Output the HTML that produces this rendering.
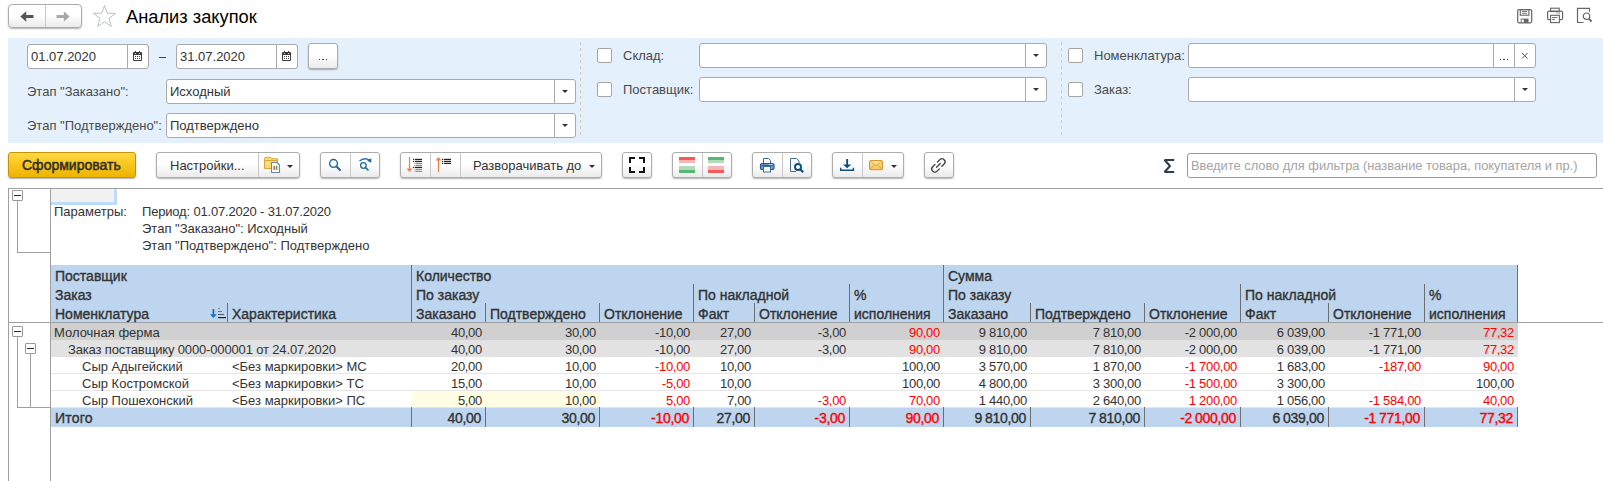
<!DOCTYPE html><html><head><meta charset="utf-8"><style>

*{box-sizing:border-box;margin:0;padding:0}
html,body{width:1603px;height:481px;overflow:hidden;background:#fff;font-family:"Liberation Sans",sans-serif;color:#333}
.abs{position:absolute}
.t{position:absolute;white-space:pre;line-height:1}
.btn{position:absolute;border:1px solid #adadad;border-radius:3px;background:linear-gradient(#ffffff 0%,#ffffff 45%,#ebebeb 100%);box-shadow:0 1px 1.5px rgba(0,0,0,.3)}
.div{position:absolute;top:0;bottom:0;width:1px;background:#c8c8c8}
.inp{position:absolute;border:1px solid #aaaaaa;border-radius:3px;background:#fff}
.cb{position:absolute;width:15px;height:15px;border:1px solid #a5a5a5;border-radius:2px;background:#fff}
.lbl{position:absolute;white-space:pre;font-size:13px;line-height:1;color:#4a4a4a}
.ln{position:absolute;background:#a0a0a0}
.c{position:absolute;white-space:pre;font-size:13px;line-height:1}
.r{text-align:right}
.red{color:#f00}
.hd{font-size:14px;-webkit-text-stroke:0.35px #333}

</style></head><body>
<div class="btn" style="left:8px;top:4px;width:74px;height:24px;border-radius:4px"><div class="div" style="left:36px"></div></div>
<svg class="abs" style="left:20px;top:10px" width="14" height="12" viewBox="0 0 14 12"><path d="M0.3 6.5 L6.2 1.2 L6.2 5 L13.5 5 L13.5 8.1 L6.2 8.1 L6.2 11.8 Z" fill="#555"/></svg>
<svg class="abs" style="left:56px;top:10px" width="14" height="12" viewBox="0 0 14 12"><path d="M13.7 6.5 L7.8 1.2 L7.8 5 L0.5 5 L0.5 8.1 L7.8 8.1 L7.8 11.8 Z" fill="#a9a9a9"/></svg>
<svg class="abs" style="left:92px;top:4px" width="26" height="24" viewBox="0 0 26 24"><path d="M12.5 1.5 L15.3 9.2 L23.5 9.4 L17 14.4 L19.3 22.5 L12.5 17.8 L5.7 22.5 L8 14.4 L1.5 9.4 L9.7 9.2 Z" fill="none" stroke="#b9bec4" stroke-width="1"/></svg>
<div class="t" style="left:126px;top:7.7px;font-size:18.3px;color:#000">Анализ закупок</div>
<svg class="abs" style="left:1516px;top:8px" width="17" height="16" viewBox="0 0 17 16">
<rect x="1.7" y="1.6" width="14" height="13.2" rx="1.2" fill="none" stroke="#666" stroke-width="1.2"/>
<rect x="4.3" y="1.6" width="8.6" height="5.6" fill="none" stroke="#666" stroke-width="1.1"/>
<line x1="6" y1="3.5" x2="11" y2="3.5" stroke="#666" stroke-width="0.9"/><line x1="6" y1="5.3" x2="11" y2="5.3" stroke="#666" stroke-width="0.9"/>
<rect x="4.7" y="10.6" width="7.8" height="4.2" fill="#666"/><rect x="5.6" y="11.6" width="2.2" height="2.6" fill="#fff"/></svg>
<svg class="abs" style="left:1546px;top:7px" width="18" height="17" viewBox="0 0 18 17">
<rect x="4.6" y="1.2" width="8.6" height="3.4" fill="none" stroke="#666" stroke-width="1.1"/>
<rect x="1.6" y="4.2" width="15" height="8.5" rx="1.5" fill="none" stroke="#666" stroke-width="1.2"/>
<rect x="4.6" y="8.3" width="8.8" height="7.3" fill="#fff" stroke="#666" stroke-width="1.1"/>
<line x1="6" y1="10.5" x2="11.5" y2="10.5" stroke="#666" stroke-width="0.9"/><line x1="6" y1="12.5" x2="9" y2="12.5" stroke="#666" stroke-width="0.9"/>
<line x1="10.5" y1="6.1" x2="11.6" y2="6.1" stroke="#666" stroke-width="0.9"/><line x1="12.6" y1="6.1" x2="14" y2="6.1" stroke="#666" stroke-width="0.9"/></svg>
<svg class="abs" style="left:1576px;top:7px" width="18" height="17" viewBox="0 0 18 17">
<path d="M7.5 15.5 L1.5 15.5 L1.5 1.3 L13.5 1.3 L13.5 4.8" fill="none" stroke="#666" stroke-width="1.2"/>
<circle cx="10.5" cy="9.2" r="3.2" fill="none" stroke="#666" stroke-width="1.2"/>
<line x1="12.8" y1="11.6" x2="15.6" y2="14.6" stroke="#666" stroke-width="1.8"/></svg>
<div class="abs" style="left:8px;top:38px;width:1595px;height:105px;background:#e4f0fc"></div>
<div class="inp" style="left:27px;top:44px;width:122px;height:25px"><div class="div" style="left:99px;background:#aaa"></div></div>
<div class="t" style="left:31px;top:50px;font-size:13px;color:#333">01.07.2020</div>
<svg class="abs" style="left:133px;top:51px" width="9" height="10" viewBox="0 0 9 10"><rect x="0" y="1" width="9" height="9" rx="1" fill="#3c3c3c"/><rect x="1" y="4" width="7" height="5" fill="#fff"/><rect x="2" y="0" width="1" height="2" fill="#3c3c3c"/><rect x="6" y="0" width="1" height="2" fill="#3c3c3c"/><rect x="2" y="2" width="1" height="1" fill="#ccc"/><rect x="6" y="2" width="1" height="1" fill="#ccc"/><g fill="#3c3c3c"><rect x="2" y="5" width="1" height="1"/><rect x="4" y="5" width="1" height="1"/><rect x="6" y="5" width="1" height="1"/><rect x="2" y="7" width="1" height="1"/><rect x="4" y="7" width="1" height="1"/><rect x="6" y="7" width="1" height="1"/></g></svg>
<div class="abs" style="left:159px;top:57px;width:7px;height:1px;background:#444"></div>
<div class="inp" style="left:176px;top:44px;width:122px;height:25px"><div class="div" style="left:99px;background:#aaa"></div></div>
<div class="t" style="left:180px;top:50px;font-size:13px;color:#333">31.07.2020</div>
<svg class="abs" style="left:282px;top:51px" width="9" height="10" viewBox="0 0 9 10"><rect x="0" y="1" width="9" height="9" rx="1" fill="#3c3c3c"/><rect x="1" y="4" width="7" height="5" fill="#fff"/><rect x="2" y="0" width="1" height="2" fill="#3c3c3c"/><rect x="6" y="0" width="1" height="2" fill="#3c3c3c"/><rect x="2" y="2" width="1" height="1" fill="#ccc"/><rect x="6" y="2" width="1" height="1" fill="#ccc"/><g fill="#3c3c3c"><rect x="2" y="5" width="1" height="1"/><rect x="4" y="5" width="1" height="1"/><rect x="6" y="5" width="1" height="1"/><rect x="2" y="7" width="1" height="1"/><rect x="4" y="7" width="1" height="1"/><rect x="6" y="7" width="1" height="1"/></g></svg>
<div class="btn" style="left:308px;top:43px;width:30px;height:26px"></div>
<div class="abs" style="left:319.2px;top:59px;width:1.2px;height:1.2px;background:#444"></div>
<div class="abs" style="left:322.4px;top:59px;width:1.2px;height:1.2px;background:#444"></div>
<div class="abs" style="left:325.6px;top:59px;width:1.2px;height:1.2px;background:#444"></div>
<div class="lbl" style="left:27px;top:85px">Этап "Заказано":</div>
<div class="inp" style="left:166px;top:79px;width:410px;height:25px"></div>
<div class="abs" style="left:554px;top:79px;width:1px;height:25px;background:#aaa"></div>
<svg class="abs" style="left:562px;top:90px" width="6" height="3" viewBox="0 0 6 3"><path d="M0 0 L6 0 L3 3 Z" fill="#333"/></svg>
<div class="t" style="left:170px;top:85px;font-size:13px;color:#333">Исходный</div>
<div class="lbl" style="left:27px;top:119px">Этап "Подтверждено":</div>
<div class="inp" style="left:166px;top:113px;width:410px;height:25px"></div>
<div class="abs" style="left:554px;top:113px;width:1px;height:25px;background:#aaa"></div>
<svg class="abs" style="left:562px;top:124px" width="6" height="3" viewBox="0 0 6 3"><path d="M0 0 L6 0 L3 3 Z" fill="#333"/></svg>
<div class="t" style="left:170px;top:119px;font-size:13px;color:#333">Подтверждено</div>
<div class="abs" style="left:580px;top:42px;width:1px;height:96px;background:repeating-linear-gradient(#d4c8c0 0 3px,transparent 3px 6px)"></div>
<div class="abs" style="left:1061px;top:42px;width:1px;height:96px;background:repeating-linear-gradient(#d4c8c0 0 3px,transparent 3px 6px)"></div>
<div class="cb" style="left:597px;top:48px"></div><div class="lbl" style="left:623px;top:48.6px">Склад:</div>
<div class="inp" style="left:699px;top:43px;width:348px;height:25px"></div>
<div class="abs" style="left:1025px;top:43px;width:1px;height:25px;background:#aaa"></div>
<svg class="abs" style="left:1033px;top:54px" width="6" height="3" viewBox="0 0 6 3"><path d="M0 0 L6 0 L3 3 Z" fill="#333"/></svg>
<div class="cb" style="left:597px;top:82px"></div><div class="lbl" style="left:623px;top:82.8px">Поставщик:</div>
<div class="inp" style="left:699px;top:77px;width:348px;height:25px"></div>
<div class="abs" style="left:1025px;top:77px;width:1px;height:25px;background:#aaa"></div>
<svg class="abs" style="left:1033px;top:88px" width="6" height="3" viewBox="0 0 6 3"><path d="M0 0 L6 0 L3 3 Z" fill="#333"/></svg>
<div class="cb" style="left:1068px;top:48px"></div><div class="lbl" style="left:1094px;top:48.6px">Номенклатура:</div>
<div class="inp" style="left:1188px;top:43px;width:348px;height:25px"></div>
<div class="abs" style="left:1514px;top:43px;width:1px;height:25px;background:#aaa"></div>
<svg class="abs" style="left:1521px;top:52px" width="8" height="8" viewBox="0 0 8 8"><path d="M1 1 L6.5 6.5 M6.5 1 L1 6.5" stroke="#555" stroke-width="1"/></svg>
<div class="abs" style="left:1493px;top:43px;width:1px;height:25px;background:#aaa"></div>
<div class="abs" style="left:1500.2px;top:59px;width:1.2px;height:1.2px;background:#444"></div>
<div class="abs" style="left:1503.4px;top:59px;width:1.2px;height:1.2px;background:#444"></div>
<div class="abs" style="left:1506.6px;top:59px;width:1.2px;height:1.2px;background:#444"></div>
<div class="cb" style="left:1068px;top:82px"></div><div class="lbl" style="left:1094px;top:82.8px">Заказ:</div>
<div class="inp" style="left:1188px;top:77px;width:348px;height:25px"></div>
<div class="abs" style="left:1514px;top:77px;width:1px;height:25px;background:#aaa"></div>
<svg class="abs" style="left:1522px;top:88px" width="6" height="3" viewBox="0 0 6 3"><path d="M0 0 L6 0 L3 3 Z" fill="#333"/></svg>
<div class="btn" style="left:8px;top:152px;width:128px;height:26px;border-color:#c49408;background:linear-gradient(#fdd842,#f7c51c 50%,#eeb400)"></div>
<div class="t" style="left:22px;top:157.8px;font-size:14px;color:#2a2a2a;-webkit-text-stroke:0.45px #2a2a2a">Сформировать</div>
<div class="btn" style="left:156px;top:152px;width:144px;height:26px"><div class="div" style="left:101px"></div></div>
<div class="t" style="left:170px;top:158.6px;font-size:13px;color:#333">Настройки...</div>
<svg class="abs" style="left:263px;top:156px" width="18" height="18" viewBox="0 0 18 18">
<path d="M1.5 4.5 L1.5 2.8 Q1.5 1.3 3 1.3 L7 1.3 Q8.3 1.3 8.8 2.8 L14.5 2.8 L14.5 12.5 L1.5 12.5 Z" fill="#f9dc7a" stroke="#dba43a" stroke-width="1"/>
<path d="M1.5 4.5 L14.5 4.5" stroke="#dba43a" stroke-width="1"/>
<path d="M8.5 6.5 L14 6.5 L16.5 9 L16.5 16.5 L8.5 16.5 Z" fill="#fff" stroke="#70889c" stroke-width="1.1" stroke-linejoin="round"/>
<rect x="10.5" y="10" width="1.3" height="3.6" fill="#e83030"/><rect x="13" y="10" width="1.3" height="3.6" fill="#30b040"/><rect x="10" y="13.6" width="5" height="0.5" fill="#999"/></svg>
<svg class="abs" style="left:287px;top:165px" width="6" height="3" viewBox="0 0 6 3"><path d="M0 0 L6 0 L3 3 Z" fill="#333"/></svg>
<div class="btn" style="left:320px;top:152px;width:60px;height:26px"><div class="div" style="left:29px"></div></div>
<svg class="abs" style="left:326px;top:156px" width="18" height="18" viewBox="0 0 18 18">
<circle cx="7.5" cy="7.4" r="3.9" fill="none" stroke="#1f6aa0" stroke-width="1.4"/><line x1="10.3" y1="10.3" x2="14" y2="14" stroke="#1f6aa0" stroke-width="2" stroke-linecap="round"/></svg>
<svg class="abs" style="left:356px;top:156px" width="18" height="18" viewBox="0 0 18 18">
<circle cx="7.4" cy="9.5" r="2.8" fill="none" stroke="#1f6aa0" stroke-width="1.3"/><line x1="9.5" y1="11.6" x2="12" y2="14" stroke="#1f6aa0" stroke-width="1.7" stroke-linecap="round"/>
<path d="M3.5 5 Q8.5 0.8 13.5 4.2" fill="none" stroke="#1f6aa0" stroke-width="1.5"/><path d="M11 4.8 L15.3 2.2 L15.3 6.8 Z" fill="#1f6aa0"/></svg>
<div class="btn" style="left:400px;top:152px;width:202px;height:26px"><div class="div" style="left:29px"></div><div class="div" style="left:59px"></div></div>
<svg class="abs" style="left:405px;top:156px" width="20" height="18" viewBox="0 0 20 18">
<line x1="4.5" y1="1" x2="4.5" y2="14" stroke="#f08040" stroke-width="1.2"/><path d="M1.5 12.5 L7.5 12.5 L4.5 16 Z" fill="#f08040"/>
<g fill="#222"><rect x="8" y="2.8" width="1.2" height="1.2"/><rect x="10" y="2.8" width="7" height="1.2"/><rect x="8" y="4.8" width="1.2" height="1.2"/><rect x="10" y="4.8" width="7" height="1.2"/><rect x="8" y="10.8" width="1.2" height="1.2"/><rect x="10" y="10.8" width="7" height="1.2"/></g>
<g fill="#777"><rect x="9.5" y="6.8" width="1" height="1"/><rect x="11" y="6.8" width="6" height="1"/><rect x="9.5" y="8.8" width="1" height="1"/><rect x="11" y="8.8" width="6" height="1"/><rect x="9.5" y="12.8" width="1" height="1"/><rect x="11" y="12.8" width="6" height="1"/><rect x="9.5" y="14.8" width="1" height="1"/><rect x="11" y="14.8" width="6" height="1"/></g></svg>
<svg class="abs" style="left:434px;top:156px" width="20" height="18" viewBox="0 0 20 18">
<line x1="4.5" y1="3" x2="4.5" y2="16" stroke="#f08040" stroke-width="1.2"/><path d="M1.5 4.5 L7.5 4.5 L4.5 1 Z" fill="#f08040"/>
<g fill="#222"><rect x="8" y="2.8" width="1.2" height="1.2"/><rect x="10" y="2.8" width="7" height="1.2"/><rect x="8" y="4.8" width="1.2" height="1.2"/><rect x="10" y="4.8" width="7" height="1.2"/><rect x="8" y="6.8" width="1.2" height="1.2"/><rect x="10" y="6.8" width="7" height="1.2"/></g></svg>
<div class="t" style="left:473px;top:158.6px;font-size:13px;color:#333">Разворачивать до</div>
<svg class="abs" style="left:589px;top:165px" width="6" height="3" viewBox="0 0 6 3"><path d="M0 0 L6 0 L3 3 Z" fill="#333"/></svg>
<div class="btn" style="left:622px;top:152px;width:30px;height:26px"></div>
<svg class="abs" style="left:628px;top:156px" width="18" height="18" viewBox="0 0 18 18" fill="none" stroke="#111" stroke-width="2">
<path d="M2 7 L2 2 L7 2"/><path d="M11 2 L16 2 L16 7"/><path d="M2 11 L2 16 L7 16"/><path d="M16 11 L16 16 L11 16"/></svg>
<div class="btn" style="left:672px;top:152px;width:60px;height:26px"><div class="div" style="left:29px"></div></div>
<div class="abs" style="left:679px;top:157px;width:16px;height:3px;background:#f25a5a"></div>
<div class="abs" style="left:679px;top:160px;width:16px;height:3px;background:#f9b4b4"></div>
<div class="abs" style="left:679px;top:166px;width:16px;height:4px;background:#b0dcb8"></div>
<div class="abs" style="left:679px;top:170px;width:16px;height:3px;background:#5cb672"></div>
<div class="abs" style="left:708px;top:157px;width:16px;height:3px;background:#5cb672"></div>
<div class="abs" style="left:708px;top:160px;width:16px;height:3px;background:#b0dcb8"></div>
<div class="abs" style="left:708px;top:166px;width:16px;height:4px;background:#f9b4b4"></div>
<div class="abs" style="left:708px;top:170px;width:16px;height:3px;background:#f25a5a"></div>
<div class="btn" style="left:752px;top:152px;width:60px;height:26px"><div class="div" style="left:29px"></div></div>
<svg class="abs" style="left:759px;top:157px" width="17" height="17" viewBox="0 0 17 17">
<path d="M4.5 7 V1.5 H9.5 L11.5 3.5 V7" fill="#fff" stroke="#3d6a94" stroke-width="1"/>
<rect x="1.5" y="6.5" width="13.5" height="6" rx="1.6" fill="#6f9fcf" stroke="#285a88" stroke-width="1.2"/>
<line x1="2.5" y1="8.3" x2="14" y2="8.3" stroke="#285a88" stroke-width="1"/>
<rect x="10" y="7" width="1.2" height="1" fill="#fff"/><rect x="12" y="7" width="1.2" height="1" fill="#fff"/>
<rect x="4.5" y="9.5" width="7" height="5.5" fill="#fff" stroke="#3d6a94" stroke-width="1"/></svg>
<svg class="abs" style="left:789px;top:157px" width="17" height="17" viewBox="0 0 17 17">
<path d="M7 14.5 H1.5 V1.5 H7.5 L10 4 V6" fill="#fafafa" stroke="#4a6a88" stroke-width="1"/>
<circle cx="9" cy="10" r="3" fill="#fff" stroke="#0c4c82" stroke-width="1.9"/><line x1="11.2" y1="12.2" x2="14.2" y2="15.2" stroke="#0c4c82" stroke-width="2.2"/></svg>
<div class="btn" style="left:832px;top:152px;width:72px;height:26px"><div class="div" style="left:29px"></div></div>
<svg class="abs" style="left:839px;top:157px" width="17" height="16" viewBox="0 0 17 16" fill="#0f4f80">
<rect x="7.2" y="2" width="1.9" height="7"/><path d="M4 7.6 L12.3 7.6 L8.15 11.3 Z"/><path d="M1 10.8 L2.4 10.8 L2.4 12.6 L13.7 12.6 L13.7 10.8 L15.1 10.8 L15.1 14 L1 14 Z"/></svg>
<svg class="abs" style="left:868px;top:159px" width="16" height="13" viewBox="0 0 16 13">
<defs><linearGradient id="env" x1="0" y1="0" x2="0" y2="1"><stop offset="0" stop-color="#fde7a0"/><stop offset="1" stop-color="#f3c25a"/></linearGradient></defs>
<rect x="1.5" y="1.5" width="13" height="9.3" rx="1.5" fill="url(#env)" stroke="#d6952a" stroke-width="1.1"/>
<path d="M2.5 2.5 L8 6.8 L13.5 2.5 M2.5 10 L6.3 5.8 M13.5 10 L9.7 5.8" fill="none" stroke="#d9a03a" stroke-width="0.9"/></svg>
<svg class="abs" style="left:891px;top:165px" width="6" height="3" viewBox="0 0 6 3"><path d="M0 0 L6 0 L3 3 Z" fill="#333"/></svg>
<div class="btn" style="left:924px;top:152px;width:30px;height:26px"></div>
<svg class="abs" style="left:929px;top:156px" width="19" height="19" viewBox="0 0 19 19" fill="none" stroke="#444" stroke-width="1.35" stroke-linecap="round">
<path d="M5.935 8.481 L3.672 10.744 A3.1 3.1 0 0 0 8.056 15.128 L10.319 12.865"/><path d="M8.481 5.935 L10.744 3.672 A3.1 3.1 0 0 1 15.128 8.056 L12.865 10.319"/><path d="M7.562 11.238 L11.238 7.562"/></svg>
<svg class="abs" style="left:1162px;top:158px" width="13" height="16" viewBox="0 0 13 16"><path d="M12.2 2 H2.6 L8 8 L2.6 14 H12.2" fill="none" stroke="#2c3e50" stroke-width="2.1" stroke-linejoin="bevel"/></svg>
<div class="inp" style="left:1187px;top:153px;width:410px;height:25px;border-color:#999"></div>
<div class="t" style="left:1191px;top:160px;font-size:12.85px;color:#a4a4a4">Введите слово для фильтра (название товара, покупателя и пр.)</div>
<div class="ln" style="left:8px;top:188px;width:1595px;height:1px"></div>
<div class="ln" style="left:8px;top:188px;width:1px;height:293px"></div>
<div class="ln" style="left:50px;top:188px;width:1px;height:293px"></div>
<div class="abs" style="left:51px;top:189px;width:66px;height:16px;background:#f1f1f1;border-right:3px solid #bcdcfa;border-bottom:3px solid #bcdcfa"></div>
<div class="abs" style="left:12px;top:190px;width:11px;height:11px;border:1px solid #9a9a9a;border-radius:1px;background:#fff"><div class="abs" style="left:1px;top:4px;width:7px;height:1.4px;background:#2a2a2a"></div></div>
<div class="ln" style="left:17px;top:200px;width:1px;height:52px"></div>
<div class="ln" style="left:17px;top:252px;width:34px;height:1px"></div>
<div class="c" style="left:54px;top:205px">Параметры:</div>
<div class="c" style="left:142px;top:205px;letter-spacing:-0.18px">Период: 01.07.2020 - 31.07.2020</div>
<div class="c" style="left:142px;top:222px">Этап "Заказано": Исходный</div>
<div class="c" style="left:142px;top:239px">Этап "Подтверждено": Подтверждено</div>
<div class="abs" style="left:51px;top:265px;width:1467px;height:57px;background:#bdd5ee"></div>
<div class="ln" style="left:8px;top:322px;width:1595px;height:1px"></div>
<div class="abs" style="left:411px;top:265px;width:1px;height:57px;background:#6e6e6e"></div>
<div class="abs" style="left:943px;top:265px;width:1px;height:57px;background:#6e6e6e"></div>
<div class="abs" style="left:1517px;top:265px;width:1px;height:57px;background:#6e6e6e"></div>
<div class="abs" style="left:693px;top:284px;width:1px;height:38px;background:#6e6e6e"></div>
<div class="abs" style="left:849px;top:284px;width:1px;height:38px;background:#6e6e6e"></div>
<div class="abs" style="left:1240px;top:284px;width:1px;height:38px;background:#6e6e6e"></div>
<div class="abs" style="left:1424px;top:284px;width:1px;height:38px;background:#6e6e6e"></div>
<div class="abs" style="left:485px;top:303px;width:1px;height:19px;background:#6e6e6e"></div>
<div class="abs" style="left:599px;top:303px;width:1px;height:19px;background:#6e6e6e"></div>
<div class="abs" style="left:754px;top:303px;width:1px;height:19px;background:#6e6e6e"></div>
<div class="abs" style="left:1030px;top:303px;width:1px;height:19px;background:#6e6e6e"></div>
<div class="abs" style="left:1144px;top:303px;width:1px;height:19px;background:#6e6e6e"></div>
<div class="abs" style="left:1328px;top:303px;width:1px;height:19px;background:#6e6e6e"></div>
<div class="abs" style="left:227px;top:303px;width:1px;height:19px;background:#6e6e6e"></div>
<div class="c hd" style="left:55px;top:269px;">Поставщик</div>
<div class="c hd" style="left:55px;top:288px;">Заказ</div>
<div class="c hd" style="left:55px;top:307px;">Номенклатура</div>
<div class="c hd" style="left:232px;top:307px;">Характеристика</div>
<div class="c hd" style="left:416px;top:269px;">Количество</div>
<div class="c hd" style="left:416px;top:288px;">По заказу</div>
<div class="c hd" style="left:698px;top:288px;">По накладной</div>
<div class="c hd" style="left:854px;top:288px;">%</div>
<div class="c hd" style="left:416px;top:307px;">Заказано</div>
<div class="c hd" style="left:490px;top:307px;">Подтверждено</div>
<div class="c hd" style="left:604px;top:307px;">Отклонение</div>
<div class="c hd" style="left:698px;top:307px;">Факт</div>
<div class="c hd" style="left:759px;top:307px;">Отклонение</div>
<div class="c hd" style="left:854px;top:307px;">исполнения</div>
<div class="c hd" style="left:948px;top:269px;">Сумма</div>
<div class="c hd" style="left:948px;top:288px;">По заказу</div>
<div class="c hd" style="left:1245px;top:288px;">По накладной</div>
<div class="c hd" style="left:1429px;top:288px;">%</div>
<div class="c hd" style="left:948px;top:307px;">Заказано</div>
<div class="c hd" style="left:1035px;top:307px;">Подтверждено</div>
<div class="c hd" style="left:1149px;top:307px;">Отклонение</div>
<div class="c hd" style="left:1245px;top:307px;">Факт</div>
<div class="c hd" style="left:1333px;top:307px;">Отклонение</div>
<div class="c hd" style="left:1429px;top:307px;">исполнения</div>
<svg class="abs" style="left:208px;top:304px" width="20" height="16" viewBox="0 0 20 16">
<rect x="4.6" y="5" width="1.7" height="6" fill="#1f6bb5"/><path d="M2 10.2 L8.8 10.2 L5.45 14 Z" fill="#1f6bb5"/>
<rect x="10" y="4" width="2" height="1" fill="#8a8a8a"/><rect x="10" y="7" width="4" height="1" fill="#777"/><rect x="10" y="10" width="6" height="1" fill="#555"/><rect x="10" y="13" width="8" height="1.2" fill="#222"/></svg>
<div class="abs" style="left:51px;top:323px;width:1467px;height:17px;background:#d0d0d0"></div>
<div class="c" style="left:54px;top:326px">Молочная ферма</div>
<div class="c" style="right:1121px;top:326px;letter-spacing:-0.3px">40,00</div>
<div class="c" style="right:1007px;top:326px;letter-spacing:-0.3px">30,00</div>
<div class="c" style="right:913px;top:326px;letter-spacing:-0.3px">-10,00</div>
<div class="c" style="right:852px;top:326px;letter-spacing:-0.3px">27,00</div>
<div class="c" style="right:757px;top:326px;letter-spacing:-0.3px">-3,00</div>
<div class="c red" style="right:663px;top:326px;letter-spacing:-0.3px">90,00</div>
<div class="c" style="right:576px;top:326px;letter-spacing:-0.3px">9 810,00</div>
<div class="c" style="right:462px;top:326px;letter-spacing:-0.3px">7 810,00</div>
<div class="c" style="right:366px;top:326px;letter-spacing:-0.3px">-2 000,00</div>
<div class="c" style="right:278px;top:326px;letter-spacing:-0.3px">6 039,00</div>
<div class="c" style="right:182px;top:326px;letter-spacing:-0.3px">-1 771,00</div>
<div class="c red" style="right:89px;top:326px;letter-spacing:-0.3px">77,32</div>
<div class="abs" style="left:51px;top:340px;width:1467px;height:17px;background:#e2e2e2"></div>
<div class="c" style="left:68px;top:343px;letter-spacing:-0.15px">Заказ поставщику 0000-000001 от 24.07.2020</div>
<div class="c" style="right:1121px;top:343px;letter-spacing:-0.3px">40,00</div>
<div class="c" style="right:1007px;top:343px;letter-spacing:-0.3px">30,00</div>
<div class="c" style="right:913px;top:343px;letter-spacing:-0.3px">-10,00</div>
<div class="c" style="right:852px;top:343px;letter-spacing:-0.3px">27,00</div>
<div class="c" style="right:757px;top:343px;letter-spacing:-0.3px">-3,00</div>
<div class="c red" style="right:663px;top:343px;letter-spacing:-0.3px">90,00</div>
<div class="c" style="right:576px;top:343px;letter-spacing:-0.3px">9 810,00</div>
<div class="c" style="right:462px;top:343px;letter-spacing:-0.3px">7 810,00</div>
<div class="c" style="right:366px;top:343px;letter-spacing:-0.3px">-2 000,00</div>
<div class="c" style="right:278px;top:343px;letter-spacing:-0.3px">6 039,00</div>
<div class="c" style="right:182px;top:343px;letter-spacing:-0.3px">-1 771,00</div>
<div class="c red" style="right:89px;top:343px;letter-spacing:-0.3px">77,32</div>
<div class="abs" style="left:51px;top:357px;width:1467px;height:17px;background:#fff"></div>
<div class="abs" style="left:51px;top:373px;width:1467px;height:1px;background:#e6e6e6"></div>
<div class="c" style="left:82px;top:360px">Сыр Адыгейский</div>
<div class="c" style="left:232px;top:360px">&lt;Без маркировки&gt; МС</div>
<div class="c" style="right:1121px;top:360px;letter-spacing:-0.3px">20,00</div>
<div class="c" style="right:1007px;top:360px;letter-spacing:-0.3px">10,00</div>
<div class="c red" style="right:913px;top:360px;letter-spacing:-0.3px">-10,00</div>
<div class="c" style="right:852px;top:360px;letter-spacing:-0.3px">10,00</div>
<div class="c" style="right:663px;top:360px;letter-spacing:-0.3px">100,00</div>
<div class="c" style="right:576px;top:360px;letter-spacing:-0.3px">3 570,00</div>
<div class="c" style="right:462px;top:360px;letter-spacing:-0.3px">1 870,00</div>
<div class="c red" style="right:366px;top:360px;letter-spacing:-0.3px">-1 700,00</div>
<div class="c" style="right:278px;top:360px;letter-spacing:-0.3px">1 683,00</div>
<div class="c red" style="right:182px;top:360px;letter-spacing:-0.3px">-187,00</div>
<div class="c red" style="right:89px;top:360px;letter-spacing:-0.3px">90,00</div>
<div class="abs" style="left:51px;top:374px;width:1467px;height:17px;background:#fff"></div>
<div class="abs" style="left:51px;top:390px;width:1467px;height:1px;background:#e6e6e6"></div>
<div class="c" style="left:82px;top:377px">Сыр Костромской</div>
<div class="c" style="left:232px;top:377px">&lt;Без маркировки&gt; ТС</div>
<div class="c" style="right:1121px;top:377px;letter-spacing:-0.3px">15,00</div>
<div class="c" style="right:1007px;top:377px;letter-spacing:-0.3px">10,00</div>
<div class="c red" style="right:913px;top:377px;letter-spacing:-0.3px">-5,00</div>
<div class="c" style="right:852px;top:377px;letter-spacing:-0.3px">10,00</div>
<div class="c" style="right:663px;top:377px;letter-spacing:-0.3px">100,00</div>
<div class="c" style="right:576px;top:377px;letter-spacing:-0.3px">4 800,00</div>
<div class="c" style="right:462px;top:377px;letter-spacing:-0.3px">3 300,00</div>
<div class="c red" style="right:366px;top:377px;letter-spacing:-0.3px">-1 500,00</div>
<div class="c" style="right:278px;top:377px;letter-spacing:-0.3px">3 300,00</div>
<div class="c" style="right:89px;top:377px;letter-spacing:-0.3px">100,00</div>
<div class="abs" style="left:51px;top:391px;width:1467px;height:17px;background:#fff"></div>
<div class="abs" style="left:51px;top:407px;width:1467px;height:1px;background:#e6e6e6"></div>
<div class="abs" style="left:412px;top:391px;width:187px;height:16px;background:#fffde3"></div>
<div class="c" style="left:82px;top:394px">Сыр Пошехонский</div>
<div class="c" style="left:232px;top:394px">&lt;Без маркировки&gt; ПС</div>
<div class="c" style="right:1121px;top:394px;letter-spacing:-0.3px">5,00</div>
<div class="c" style="right:1007px;top:394px;letter-spacing:-0.3px">10,00</div>
<div class="c red" style="right:913px;top:394px;letter-spacing:-0.3px">5,00</div>
<div class="c" style="right:852px;top:394px;letter-spacing:-0.3px">7,00</div>
<div class="c red" style="right:757px;top:394px;letter-spacing:-0.3px">-3,00</div>
<div class="c red" style="right:663px;top:394px;letter-spacing:-0.3px">70,00</div>
<div class="c" style="right:576px;top:394px;letter-spacing:-0.3px">1 440,00</div>
<div class="c" style="right:462px;top:394px;letter-spacing:-0.3px">2 640,00</div>
<div class="c red" style="right:366px;top:394px;letter-spacing:-0.3px">1 200,00</div>
<div class="c" style="right:278px;top:394px;letter-spacing:-0.3px">1 056,00</div>
<div class="c red" style="right:182px;top:394px;letter-spacing:-0.3px">-1 584,00</div>
<div class="c red" style="right:89px;top:394px;letter-spacing:-0.3px">40,00</div>
<div class="abs" style="left:51px;top:408px;width:1467px;height:19px;background:#bdd5ee"></div>
<div class="abs" style="left:411px;top:407px;width:1px;height:20px;background:#6e6e6e"></div>
<div class="abs" style="left:485px;top:407px;width:1px;height:20px;background:#6e6e6e"></div>
<div class="abs" style="left:599px;top:407px;width:1px;height:20px;background:#6e6e6e"></div>
<div class="abs" style="left:693px;top:407px;width:1px;height:20px;background:#6e6e6e"></div>
<div class="abs" style="left:754px;top:407px;width:1px;height:20px;background:#6e6e6e"></div>
<div class="abs" style="left:849px;top:407px;width:1px;height:20px;background:#6e6e6e"></div>
<div class="abs" style="left:943px;top:407px;width:1px;height:20px;background:#6e6e6e"></div>
<div class="abs" style="left:1030px;top:407px;width:1px;height:20px;background:#6e6e6e"></div>
<div class="abs" style="left:1144px;top:407px;width:1px;height:20px;background:#6e6e6e"></div>
<div class="abs" style="left:1240px;top:407px;width:1px;height:20px;background:#6e6e6e"></div>
<div class="abs" style="left:1328px;top:407px;width:1px;height:20px;background:#6e6e6e"></div>
<div class="abs" style="left:1424px;top:407px;width:1px;height:20px;background:#6e6e6e"></div>
<div class="abs" style="left:1517px;top:407px;width:1px;height:20px;background:#6e6e6e"></div>
<div class="c hd" style="left:55px;top:411px;letter-spacing:0.2px">Итого</div>
<div class="c hd" style="right:1122px;top:411px;letter-spacing:-0.3px;-webkit-text-stroke-color:#333">40,00</div>
<div class="c hd" style="right:1008px;top:411px;letter-spacing:-0.3px;-webkit-text-stroke-color:#333">30,00</div>
<div class="c red hd" style="right:914px;top:411px;letter-spacing:-0.3px;-webkit-text-stroke-color:#f00">-10,00</div>
<div class="c hd" style="right:853px;top:411px;letter-spacing:-0.3px;-webkit-text-stroke-color:#333">27,00</div>
<div class="c red hd" style="right:758px;top:411px;letter-spacing:-0.3px;-webkit-text-stroke-color:#f00">-3,00</div>
<div class="c red hd" style="right:664px;top:411px;letter-spacing:-0.3px;-webkit-text-stroke-color:#f00">90,00</div>
<div class="c hd" style="right:577px;top:411px;letter-spacing:-0.3px;-webkit-text-stroke-color:#333">9<span style="letter-spacing:-1px"> </span>810,00</div>
<div class="c hd" style="right:463px;top:411px;letter-spacing:-0.3px;-webkit-text-stroke-color:#333">7<span style="letter-spacing:-1px"> </span>810,00</div>
<div class="c red hd" style="right:367px;top:411px;letter-spacing:-0.3px;-webkit-text-stroke-color:#f00">-2<span style="letter-spacing:-1px"> </span>000,00</div>
<div class="c hd" style="right:279px;top:411px;letter-spacing:-0.3px;-webkit-text-stroke-color:#333">6<span style="letter-spacing:-1px"> </span>039,00</div>
<div class="c red hd" style="right:183px;top:411px;letter-spacing:-0.3px;-webkit-text-stroke-color:#f00">-1<span style="letter-spacing:-1px"> </span>771,00</div>
<div class="c red hd" style="right:90px;top:411px;letter-spacing:-0.3px;-webkit-text-stroke-color:#f00">77,32</div>
<div class="abs" style="left:12px;top:326px;width:11px;height:11px;border:1px solid #9a9a9a;border-radius:1px;background:#fff"><div class="abs" style="left:1px;top:4px;width:7px;height:1.4px;background:#2a2a2a"></div></div>
<div class="abs" style="left:25px;top:343px;width:11px;height:11px;border:1px solid #9a9a9a;border-radius:1px;background:#fff"><div class="abs" style="left:1px;top:4px;width:7px;height:1.4px;background:#2a2a2a"></div></div>
<div class="ln" style="left:17px;top:336px;width:1px;height:71px"></div>
<div class="ln" style="left:30px;top:353px;width:1px;height:54px"></div>
<div class="ln" style="left:17px;top:407px;width:34px;height:1px"></div>
</body></html>
